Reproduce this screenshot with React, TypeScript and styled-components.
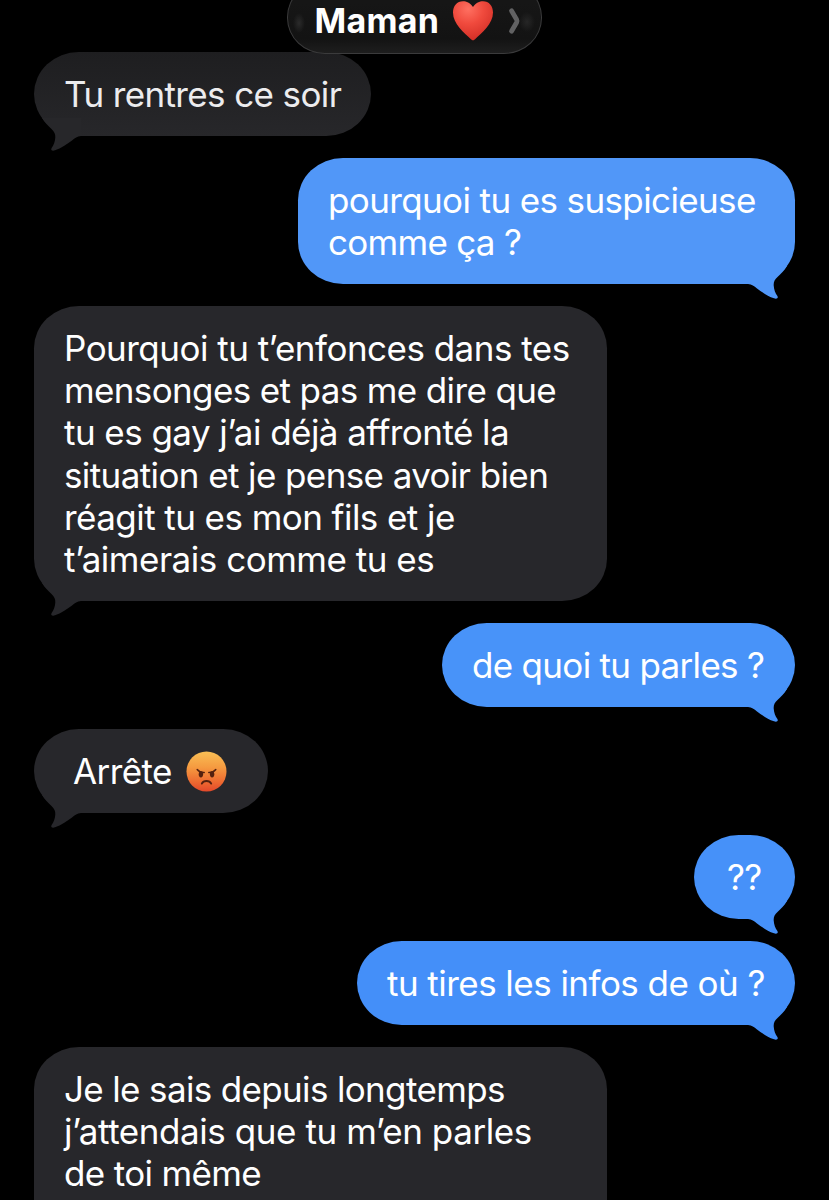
import React from "react";
import styled, { createGlobalStyle, css } from "styled-components";

const GlobalStyle = createGlobalStyle`
  * { box-sizing: border-box; }
  html, body { margin: 0; padding: 0; background: #000; }
  body { overflow: hidden; }
`;

type Side = "in" | "out";

const Screen = styled.main`
  position: relative;
  width: 829px;
  height: 1200px;
  overflow: hidden;
  background: #000;
  font-family: Inter, "Noto Sans", sans-serif;
`;

const Thread = styled.section`
  display: flex;
  flex-direction: column;
  gap: 21.5px;
  padding: 51.6px 34px 0;
`;

const Bubble = styled.article<{ $side: Side; $width: number; $fill: string; $ink?: string; $indent?: number }>`
  position: relative;
  flex: none;
  align-self: ${(p) => (p.$side === "in" ? "flex-start" : "flex-end")};
  width: ${(p) => p.$width}px;
  padding: 21.4px 0 20.9px ${(p) => p.$indent ?? 30}px;
  border-radius: 45px / 42.2px;
  background: ${(p) => p.$fill};
  color: ${(p) => p.$ink ?? "#fff"};
`;

const Line = styled.div<{ $track?: number }>`
  display: flex;
  align-items: center;
  height: 42.2px;
  font-size: 35px;
  line-height: 42.2px;
  letter-spacing: ${(p) => p.$track ?? 0}px;
  white-space: pre;
`;

const TailSvg = styled.svg<{ $side: Side }>`
  position: absolute;
  bottom: -16px;
  width: 50px;
  height: 44px;
  ${(p) =>
    p.$side === "in"
      ? css`left: 0;`
      : css`right: 0; transform: scaleX(-1);`}
`;

const HeaderPill = styled.header`
  position: absolute;
  z-index: 2;
  top: -19px;
  left: 287px;
  display: flex;
  align-items: center;
  width: 255px;
  height: 72.5px;
  padding: 7px 20px 0 26.5px;
  border: 1.5px solid #3b3b3c;
  border-radius: 38px / 36px;
  background:
    radial-gradient(ellipse 6px 10px at 11px 41px, #2b2b2b, transparent),
    radial-gradient(ellipse 8px 10px at 239px 40px, #262626, transparent),
    linear-gradient(#161616 30%, #131313 80%, #1e1e1e);
  overflow: hidden;
`;

const Name = styled.h1`
  margin: 0;
  width: 125px;
  color: #fff;
  font-size: 34px;
  font-weight: 700;
  line-height: 42px;
  letter-spacing: 0.25px;
`;

const HeartSvg = styled.svg`
  flex: none;
  width: 42px;
  height: 42px;
  margin-left: 12px;
`;

const ChevronSvg = styled.svg`
  flex: none;
  width: 13px;
  height: 28px;
  margin-left: 14.5px;
`;

const EmojiSvg = styled.svg`
  flex: none;
  width: 41px;
  height: 41px;
  margin-left: 14px;
`;

const Tail = ({ side, fill }: { side: Side; fill: string }) => (
  <TailSvg $side={side} viewBox="0 0 50 44" aria-hidden="true">
    <path
      fill={fill}
      d="M8 10 C11 15 14.5 18.3 17.5 21 C20.3 23.5 21.5 26 21.3 29.5 C21 34 19.8 37 17.6 40 C16.3 42.3 18.5 43.3 21 42.3 C27 40.5 33 36 38 32.5 C41 30.2 43 28.3 47 28 L47 10 Z"
    />
  </TailSvg>
);

const Heart = () => (
  <HeartSvg viewBox="0 0 42 42" role="img" aria-label="cœur rouge">
    <defs>
      <radialGradient id="heart" cx="0.38" cy="0.2" r="0.85">
        <stop offset="0" stopColor="#ff7061" />
        <stop offset="0.45" stopColor="#f04a3d" />
        <stop offset="1" stopColor="#cf2c24" />
      </radialGradient>
    </defs>
    <path
      fill="url(#heart)"
      d="M21 7 C18 2.6 14.5 1.2 11 1.2 C5 1.2 1 6 1 12.5 C1 24 12 32.5 19.2 39.6 Q21 41.2 22.8 39.6 C30 32.5 41 24 41 12.5 C41 6 37 1.2 31 1.2 C27.5 1.2 24 2.6 21 7 Z"
    />
  </HeartSvg>
);

const AngryFace = () => (
  <EmojiSvg viewBox="0 0 41 41" role="img" aria-label="en colère">
    <defs>
      <linearGradient id="angry" x1="0" y1="0" x2="0" y2="1">
        <stop offset="0" stopColor="#f9bf55" />
        <stop offset="0.4" stopColor="#f59a40" />
        <stop offset="0.75" stopColor="#ee6b31" />
        <stop offset="1" stopColor="#e2482a" />
      </linearGradient>
    </defs>
    <circle cx="20.5" cy="20.5" r="20" fill="url(#angry)" />
    <g fill="#54210f">
      <ellipse cx="14.9" cy="23.3" rx="2.2" ry="3.1" />
      <ellipse cx="26.1" cy="23.3" rx="2.2" ry="3.1" />
    </g>
    <g fill="none" stroke="#54210f" strokeWidth="1.5" strokeLinecap="round">
      <path d="M11.2 18.5 C13 20.7 15.7 21.7 18.2 21.5" />
      <path d="M29.8 18.5 C28 20.7 25.3 21.7 22.8 21.5" />
      <path d="M15.8 32.6 C17.5 29.2 23.5 29.2 25.2 32.6" strokeWidth="1.9" />
    </g>
  </EmojiSvg>
);

interface Message {
  side: Side;
  width: number;
  fill: string;
  tail: string;
  ink?: string;
  indent?: number;
  emoji?: boolean;
  lines: [string, number][];
}

const messages: Message[] = [
  { side: "in", width: 337, fill: "linear-gradient(#1e1e20, #27272a)", tail: "#27272a", ink: "#ececee", lines: [["Tu rentres ce soir", -0.62]] },
  { side: "out", width: 497, fill: "#5197f8", tail: "#5197f8", lines: [["pourquoi tu es suspicieuse", -0.62], ["comme ça ?", -0.72]] },
  {
    side: "in", width: 573, fill: "#27272b", tail: "#27272b",
    lines: [
      ["Pourquoi tu t’enfonces dans tes", -0.52],
      ["mensonges et pas me dire que", -0.63],
      ["tu es gay j’ai déjà affronté la", -0.55],
      ["situation et je pense avoir bien", -0.6],
      ["réagit tu es mon fils et je", -0.56],
      ["t’aimerais comme tu es", -0.48],
    ],
  },
  { side: "out", width: 353, fill: "#4893f9", tail: "#4893f9", lines: [["de quoi tu parles ?", -0.69]] },
  { side: "in", width: 234, fill: "#27272b", tail: "#27272b", indent: 39, emoji: true, lines: [["Arrête", -0.6]] },
  { side: "out", width: 101, fill: "#4691f9", tail: "#4691f9", indent: 33, lines: [["??", -0.6]] },
  { side: "out", width: 438, fill: "#448ff9", tail: "#448ff9", lines: [["tu tires les infos de où ?", -0.54]] },
  {
    side: "in", width: 573, fill: "#27272b", tail: "#27272b",
    lines: [["Je le sais depuis longtemps", -0.65], ["j’attendais que tu m’en parles", -0.43], ["de toi même", -0.65], ["", 0]],
  },
];

export default function App() {
  return (
    <Screen>
      <GlobalStyle />
      <HeaderPill>
        <Name>Maman</Name>
        <Heart />
        <ChevronSvg viewBox="0 0 13 28" aria-hidden="true">
          <path d="M3.5 3.8 L8.6 12.5 Q9.4 14 8.6 15.5 L3.5 24.2" fill="none" stroke="#626263" strokeWidth="4.8" strokeLinecap="round" />
        </ChevronSvg>
      </HeaderPill>
      <Thread>
        {messages.map((m, i) => (
          <Bubble key={i} $side={m.side} $width={m.width} $fill={m.fill} $ink={m.ink} $indent={m.indent}>
            <Tail side={m.side} fill={m.tail} />
            {m.lines.map(([text, track], j) => (
              <Line key={j} $track={track}>
                <span>{text}</span>
                {m.emoji && <AngryFace />}
              </Line>
            ))}
          </Bubble>
        ))}
      </Thread>
    </Screen>
  );
}
